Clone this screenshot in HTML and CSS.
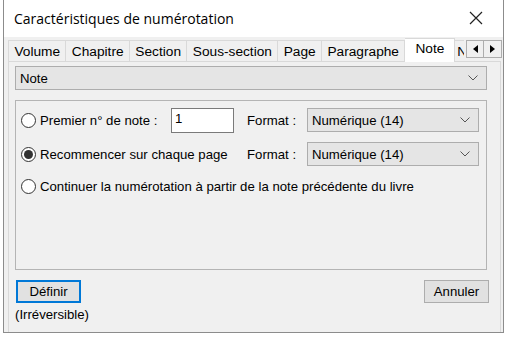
FILE: index.html
```html
<!DOCTYPE html>
<html lang="fr">

<head>
    <meta charset="UTF-8">
    <title>Caractéristiques de numérotation</title>
    <link rel="stylesheet" href="styles.css">
</head>

<body>
    <div class="window">
        <div class="titlebar">
            <span class="title">Caractéristiques de numérotation</span>
            <svg class="close" width="14" height="14" viewBox="0 0 14 14">
                <path d="M1 1L13 13M13 1L1 13" stroke="#222" stroke-width="1.2" fill="none"/>
            </svg>
        </div>

        <div class="content">
            <div class="tabs">
                <div class="tab">Volume</div>
                <div class="tab">Chapitre</div>
                <div class="tab">Section</div>
                <div class="tab">Sous-section</div>
                <div class="tab">Page</div>
                <div class="tab">Paragraphe</div>
                <div class="tab active">Note</div>
                <div class="tab cut">N</div>
                <div class="scroller">
                    <button class="arrow">
                        <svg width="5" height="8" viewBox="0 0 5 8"><path d="M5 0L0 4L5 8Z" fill="#000"/></svg>
                    </button>
                    <button class="arrow">
                        <svg width="5" height="8" viewBox="0 0 5 8"><path d="M0 0L5 4L0 8Z" fill="#000"/></svg>
                    </button>
                </div>
            </div>

            <div class="panel">
                <div class="select wide">
                    <span>Note</span>
                    <svg class="chev" width="10" height="6" viewBox="0 0 10 6"><path d="M0.5 0.5L5 5L9.5 0.5" stroke="#555" fill="none"/></svg>
                </div>

                <div class="group">
                    <div class="row">
                        <label class="radio first"><span class="dot"></span>Premier n° de note :</label>
                        <div class="textbox">1</div>
                        <span class="label">Format :</span>
                        <div class="select">
                            <span>Numérique (14)</span>
                            <svg class="chev" width="10" height="6" viewBox="0 0 10 6"><path d="M0.5 0.5L5 5L9.5 0.5" stroke="#555" fill="none"/></svg>
                        </div>
                    </div>
                    <div class="row">
                        <label class="radio checked"><span class="dot"></span>Recommencer sur chaque page</label>
                        <span class="label">Format :</span>
                        <div class="select">
                            <span>Numérique (14)</span>
                            <svg class="chev" width="10" height="6" viewBox="0 0 10 6"><path d="M0.5 0.5L5 5L9.5 0.5" stroke="#555" fill="none"/></svg>
                        </div>
                    </div>
                    <div class="row">
                        <label class="radio free"><span class="dot"></span>Continuer la numérotation à partir de la note précédente du livre</label>
                    </div>
                </div>

                <div class="footer">
                    <div class="left">
                        <button class="btn default">Définir</button>
                        <span class="hint">(Irréversible)</span>
                    </div>
                    <button class="btn">Annuler</button>
                </div>
            </div>
        </div>
    </div>
</body>

</html>
```

FILE: styles.css
```css
body {
    margin: 0;
    background: #fff;
    font-family: "Liberation Sans", Arial, sans-serif;
    font-size: 13.2px;
    color: #000;
}

.window {
    margin-left: 3px;
    width: 501px;
    height: 333px;
    border-left: 1px solid #8c8c8c;
    border-right: 1px solid #8c8c8c;
    border-bottom: 1px solid #8c8c8c;
    box-sizing: border-box;
    display: flex;
    flex-direction: column;
    background: #fff;
}

.titlebar {
    height: 37px;
    display: flex;
    align-items: center;
    justify-content: space-between;
    padding: 0 20px 0 10px;
    flex-shrink: 0;
}

.title {
    font-family: "Open Sans", "Noto Sans", sans-serif;
    font-size: 14px;
    color: #000;
    margin-top: -1px;
}

.close {
    margin-top: -2px;
}

.content {
    flex: 1;
    background: #f0f0f0;
    padding: 0 2px 0 4px;
    display: flex;
    flex-direction: column;
}

.tabs {
    display: flex;
    align-items: flex-end;
    height: 24px;
    position: relative;
    font-size: 13.7px;
}

.tab {
    height: 21px;
    line-height: 21px;
    padding: 0 5.4px;
    border: 1px solid #d9d9d9;
    border-bottom: none;
    border-left: none;
    box-sizing: border-box;
    background: #f0f0f0;
    white-space: nowrap;
}

.tab:first-child {
    border-left: 1px solid #d9d9d9;
}

.tab.active {
    height: 24px;
    line-height: 19px;
    background: #fff;
    border-color: #d9d9d9;
    margin-bottom: -1px;
    padding: 0 10px 0 10px;
    z-index: 1;
}

.tab.cut {
    width: 9px;
    overflow: hidden;
    padding-left: 2px;
    border-right: none;
}

.scroller {
    display: flex;
    position: absolute;
    right: -1px;
    top: 3px;
    background: #f0f0f0;
}

.arrow {
    width: 18px;
    height: 18px;
    padding: 0;
    border: 1px solid #adadad;
    background: #f0f0f0;
    display: flex;
    align-items: center;
    justify-content: center;
}

.arrow + .arrow {
    border-left: none;
}

.panel {
    flex: 1;
    border: 1px solid #d9d9d9;
    border-bottom: none;
    padding: 4px 12px 0 6px;
    display: flex;
    flex-direction: column;
}

.select {
    height: 24px;
    border: 1px solid #adadad;
    background: #e5e5e5;
    box-sizing: border-box;
    display: flex;
    align-items: center;
    justify-content: space-between;
    padding: 0 8px 0 4px;
    width: 172px;
}

.select.wide {
    width: 472px;
}

.group {
    margin-top: 10px;
    height: 170px;
    width: 472px;
    box-sizing: border-box;
    border: 1px solid #b4b4b4;
    padding: 6px 0 0 5px;
    display: flex;
    flex-direction: column;
}

.row {
    display: flex;
    align-items: center;
    height: 26px;
    margin-bottom: 8px;
}

.row:last-child {
    margin-top: -2px;
}

.radio {
    display: flex;
    align-items: center;
    gap: 4px;
    width: 226px;
    white-space: nowrap;
}

.radio.first {
    width: 150px;
}

.radio.free {
    width: auto;
}

.dot {
    flex-shrink: 0;
    width: 15px;
    height: 15px;
    border: 1px solid #333;
    border-radius: 50%;
    box-sizing: border-box;
    background: #fff;
    display: flex;
    align-items: center;
    justify-content: center;
}

.radio.checked .dot::after {
    content: "";
    width: 9px;
    height: 9px;
    border-radius: 50%;
    background: #333;
}

.textbox {
    width: 63px;
    height: 25px;
    box-sizing: border-box;
    border: 1px solid #7a7a7a;
    background: #fff;
    padding: 0 3px;
    line-height: 20px;
    margin-right: 13px;
}

.label {
    width: 60px;
}

.footer {
    display: flex;
    justify-content: space-between;
    align-items: flex-start;
    margin-top: 10px;
    padding-left: 1px;
    width: 473px;
}

.left {
    display: flex;
    flex-direction: column;
    gap: 4px;
}

.hint {
    margin-left: -1px;
}

.btn {
    font-family: "Liberation Sans", Arial, sans-serif;
    font-size: 13.2px;
    width: 65px;
    height: 23px;
    padding: 0;
    border: 1px solid #adadad;
    background: #e1e1e1;
}

.btn.default {
    border: 2px solid #0078d7;
}
```
